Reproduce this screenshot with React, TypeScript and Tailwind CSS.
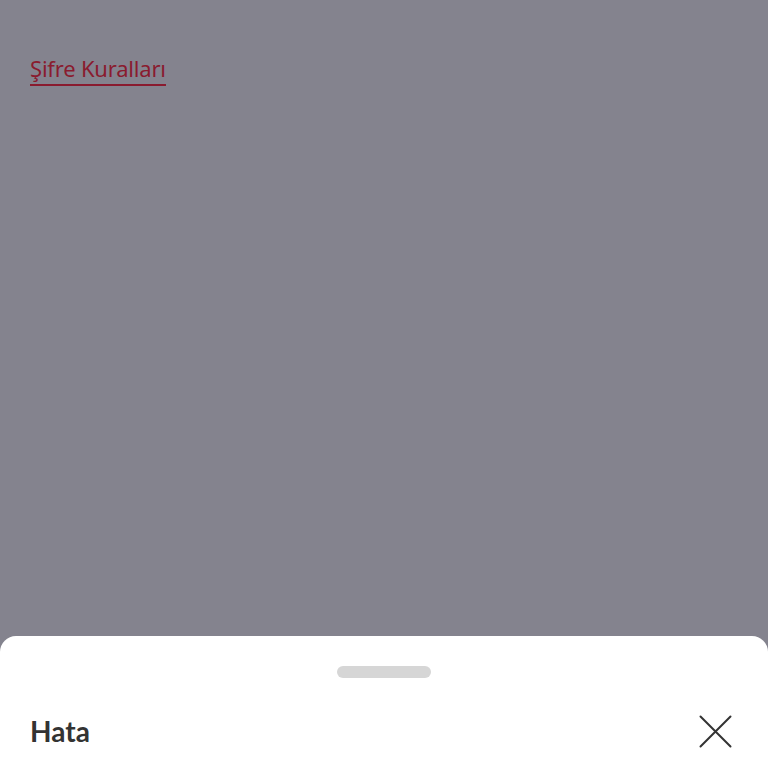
export default function App() {
  return (
    <div className="h-[768px] w-full overflow-hidden bg-[#84838e] flex flex-col" style={{ fontFamily: '"Noto Sans", sans-serif' }}>
      {/* Link */}
      <div className="px-[30px] pt-[54px]">
        <a className="inline-block text-[22px] leading-[29px] text-[#8a1b2f] border-b-2 border-[#8a1b2f] pb-[1px] tracking-[-0.2px]">
          Şifre Kuralları
        </a>
      </div>

      {/* Bottom sheet */}
      <div className="mt-auto h-[132px] bg-white rounded-t-[16px] flex flex-col">
        <div className="flex justify-center pt-[30px]">
          <div className="w-[94px] h-[12px] rounded-full bg-[#d6d6d6]" />
        </div>
        <div className="flex items-center justify-between pl-[30px] pr-[36px] pt-[36px]">
          <h2 className="text-[28px] leading-[34px] font-bold text-[#333333]" style={{ fontFamily: 'Lato, sans-serif' }}>
            Hata
          </h2>
          <svg width="33" height="33" viewBox="0 0 33 33" className="text-[#333333]">
            <path d="M1.5 1.5L31.5 31.5M31.5 1.5L1.5 31.5" stroke="currentColor" strokeWidth="2" strokeLinecap="round" fill="none" />
          </svg>
        </div>
      </div>
    </div>
  );
}
